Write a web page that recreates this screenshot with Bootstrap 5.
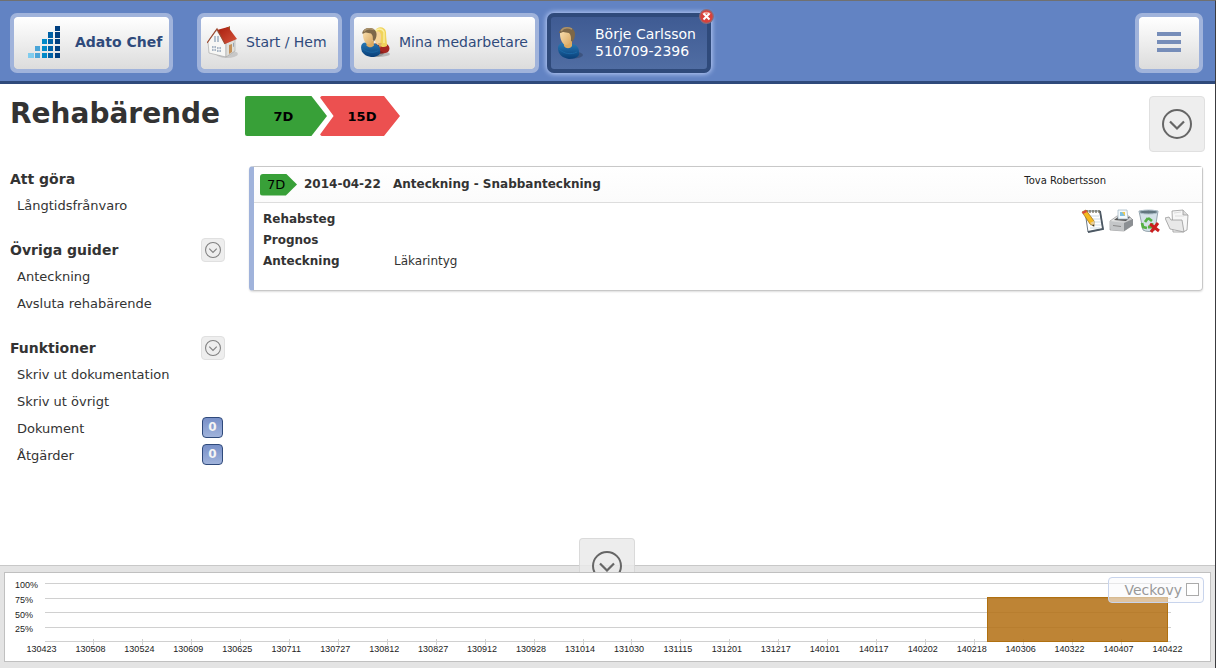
<!DOCTYPE html>
<html lang="sv">
<head>
<meta charset="utf-8">
<meta name="viewport" content="width=device-width, initial-scale=1">
<title>Rehabärende</title>
<link href="https://cdn.jsdelivr.net/npm/bootstrap@5.3.0/dist/css/bootstrap.min.css" rel="stylesheet">
<style>
body{font-family:"DejaVu Sans",Verdana,sans-serif;font-size:13px;line-height:17px;color:#333;background:#fff}
.app{min-height:100vh;border-top:1px solid #707070;border-right:1px solid #3c3c40;margin-right:1px}
.topbar{background:#6283c3;border-bottom:3px solid #2f4a7b;height:83px;padding:12px 12px 0 10px}
.nav-tile{height:60px;border:4px solid #a0b3db;border-radius:7px;background:linear-gradient(#fff,#dcdcdc);color:#2f4a7b;font-size:14px;line-height:17px;text-decoration:none;padding:0 6px 2px;background-clip:padding-box}
.nav-tile svg{flex:none}
.tile-home{min-width:145px}.tile-staff{min-width:189px}
.tile-brand{width:163px;padding:0 0 2px 14px;gap:14px;margin-right:16px;font-weight:bold;white-space:nowrap}
.tile-person{min-width:164px;padding-bottom:0;background:linear-gradient(#3f5b93,#506da3);border-color:#2f4a7b;color:#fff;box-shadow:0 0 5px 1px #b9cbf5}
.tile-close{position:absolute;top:-4px;right:-3px;width:15px;height:15px;padding:0;border:0;background:none;line-height:0}
.tile-menu{width:68px}
.pagehead{padding:12px 10px 13px 10px}
.pagehead h1{width:235px;font-size:28px;line-height:36px;font-weight:bold;margin:0;color:#333}
.stage{width:82px;height:40px;padding-right:5px;color:#000;font-weight:bold;background:#38a038;border-radius:2px 0 0 2px;clip-path:polygon(0 0,81% 0,100% 50%,81% 100%,0 100%)}
.stage-late{width:80px;margin-left:-7px;padding:0 0 0 4px;background:#ec5050;clip-path:polygon(1% 0,80% 0,100% 50%,80% 100%,1% 100%,0 96%,17% 50%,0 4%)}
.toggle{border:1px solid #e0e0e0;border-radius:4px;background:#eee;color:#666;padding:0}
.toggle-lg{width:56px;height:56px}
.toggle-sm{width:24px;height:24px;color:#808080}
.side{width:215px;margin:0 24px 0 10px;padding-top:1px}
.side h2{font-size:14px;line-height:18px;font-weight:bold;margin:0}
.side-head{height:26px}
.side section{margin-bottom:18px}
.side li{height:27px;padding:0 2px 0 7px}
.side a{color:#333;text-decoration:none}
.counter{width:21px;height:21px;border:1px solid #2f4a7b;border-radius:4px;background:linear-gradient(#7890c8,#a0b3db);color:#f4f4f4;font-weight:bold;font-size:12px;margin-bottom:2px}
.note{border:1px solid #c8c8c8;border-left:5px solid #a0b3db;border-radius:4px;box-shadow:0 1px 2px #ddd;font-size:12px;margin:1px 12px 0 0}
.note-head{height:36px;padding:0 96px 0 6px;border-bottom:1px solid #ddd;background:linear-gradient(#fff,#fbfbfb)}
.note-head h3{font-size:12px;line-height:17px;font-weight:bold;margin:0;white-space:pre}
.step-tag{width:37px;height:22px;padding-left:7px;background:#38a038;color:#000;font-size:13px;border-radius:3px 0 0 3px;clip-path:polygon(0 0,70% 0,100% 50%,70% 100%,0 100%);margin-right:7px}
.author{font-size:10px;line-height:12px;color:#222;padding-bottom:8px}
.note-body{padding:6px 13px 18px 9px}
.facts{display:grid;grid-template-columns:131px 1fr;grid-auto-rows:21px;line-height:21px;margin:0}
.facts dd{margin:0}
.tool{border:0;background:none;padding:0;width:24px;height:24px;line-height:0}
.timeline{background:#e4e4e4;border-top:1px solid #c8c8c8;padding:6px 4px;position:relative}
.chart{background:#fff;border:1px solid #c0c0c0;height:90px;font-family:"Liberation Sans",Arial,sans-serif;font-size:9px;line-height:12px;color:#222;padding-top:10px}
.y-labels{width:40px;padding-left:10px;height:59px;margin-top:-1px}
.y-labels span,.gridlines span{flex:1 1 0}
.y-labels span{white-space:nowrap;line-height:6px}
.plot{height:59px;margin-right:39px;border-bottom:1px solid #d0d0d0}
.gridlines{height:58px}
.gridlines span{border-top:1px solid #d0d0d0}
.bar{position:absolute;bottom:-1px;height:45px;background:rgba(179,112,20,.86);border:1px solid #b07010}
.ticks{display:grid;grid-template-columns:repeat(23,1fr);position:absolute;left:0;right:0;bottom:-4px;height:6px}
.ticks span{border-right:1px solid #d0d0d0}
.ticks span:last-child{border:0}
.x-labels{display:grid;grid-template-columns:repeat(24,1fr);margin:1px 18px 0 12px;text-align:center}
.fold{position:absolute;left:50%;bottom:100%;margin:0 0 -6px -29px;width:56px;height:34px;overflow:hidden;border:1px solid rgba(200,200,200,.5);border-bottom:0;border-radius:4px 4px 0 0;background:rgba(234,234,234,.85);color:#666;padding:12px 0 0;line-height:0}
.fold svg{display:block;margin:0 auto}
.week{position:absolute;right:11px;top:11px;width:96px;height:26px;border:1px solid #c8d4ec;border-radius:4px;background:rgba(250,250,252,.55);font-size:14px;color:#999;padding:1px 4px 0 0;z-index:2}
.week input{appearance:none;width:13px;height:13px;border:1px solid #aaa;background:#fff;margin:0 0 2px;border-radius:0}
</style>
</head>
<body>
<svg width="0" height="0" class="position-absolute" aria-hidden="true">
<defs>
<linearGradient id="blu" x1="0" y1="0" x2="0" y2="1"><stop offset="0" stop-color="#2878b4"/><stop offset="1" stop-color="#083e78"/></linearGradient>
<linearGradient id="skin" x1="0" y1="0" x2="1" y2="1"><stop offset="0" stop-color="#fbe3b6"/><stop offset="1" stop-color="#d8a55c"/></linearGradient>
<linearGradient id="metal" x1="0" y1="0" x2="1" y2="1"><stop offset="0" stop-color="#f4f4f4"/><stop offset="1" stop-color="#a4a7aa"/></linearGradient>
<linearGradient id="roof" x1="0" y1="0" x2="1" y2="1"><stop offset="0" stop-color="#a81d0c"/><stop offset="1" stop-color="#d6543c"/></linearGradient>
<symbol id="down" viewBox="0 0 30 30"><circle cx="15" cy="15" r="14" fill="none" stroke="currentColor" stroke-width="2"/><path d="M8 12.500l7 7 7-7" fill="none" stroke="currentColor" stroke-width="2.200"/></symbol>
<symbol id="man" viewBox="0 0 26 34"><ellipse cx="16" cy="29" rx="10" ry="3.500" fill="#000" opacity=".2"/><path d="M1 22c0-3 2-5 5-5l10 1c4 1 6 4 6 8v3c-2 3-6 4-10 4C6 32 1 29 1 22z" fill="url(#blu)"/><path d="M2 23c5 5 12 6 18 3" fill="none" stroke="#1c67a5" stroke-width="1"/><path d="M7 15h8v5c-2 3-6 3-8 0z" fill="#dcaa62"/><path d="M3 8c0-4 4-6 8-5 4 0 5 4 4 8-1 5-3 8-6 8s-6-5-6-11z" fill="url(#skin)"/><path d="M2 7C3 3 6 1 10 1c5 0 8 3 8 7 0 3-1 6-3 8l-1-2c0-3 0-5-2-7-3 0-6-2-8 0z" fill="#7d6748"/><path d="M4 5c2-3 6-4 11-2" fill="none" stroke="#ab926c" stroke-width="1.500"/></symbol>
</defs>
</svg>

<div class="app d-flex flex-column">
<header class="topbar d-flex align-items-start">
  <nav class="d-flex gap-2">
    <a class="nav-tile tile-brand d-flex align-items-center" href="#">
      <svg width="33" height="32" viewBox="0 0 33 32"><path fill="#7fccee" d="M0 27h6v5H0z"/><path fill="#4aa5d8" d="M7 20h5v5H7zM7 27h5v5H7z"/><path fill="#0089c8" d="M14 13h5v5h-5zM14 20h5v5h-5zM14 27h5v5h-5z"/><path fill="#0061a6" d="M20 6h5v6h-5zM20 13h5v5h-5zM20 20h5v5h-5zM20 27h5v5h-5z"/><path fill="#003f80" d="M27 0h5v5h-5zM27 6h5v6h-5zM27 13h5v5h-5zM27 20h5v5h-5zM27 27h5v5h-5z"/></svg>
      Adato Chef</a>
    <a class="nav-tile tile-home d-flex align-items-center gap-2" href="#">
      <svg width="31" height="34" viewBox="0 0 31 34"><ellipse cx="20" cy="29" rx="11" ry="4" fill="#000" opacity=".13"/><path d="M1 17L9 5l10 13v14L2 28z" fill="#f7f7f5" stroke="#a0a0a0" stroke-width=".6"/><path d="M19 18l9-4v12l-9 6z" fill="#e0dfda" stroke="#999" stroke-width=".5"/><path d="M19 3l4-2v6h-4z" fill="#9d5a2c"/><path d="M10 5l11-3 9 12-12 5z" fill="url(#roof)"/><path d="M0 18L10 4l8 15" fill="none" stroke="#9c4a30" stroke-width="1.200"/><path d="M7 11h2v6H7zM10 11h2v6h-2z" fill="#b4c1ce"/><path d="M5 21h4v5H5zM10 22h4v5h-4z" fill="#a9b6c4"/><path d="M7 21v5M5 23.500h4M12 22v5M10 24.500h4" stroke="#fff" stroke-width=".7"/><path d="M22 20l3-1v8l-3 2z" fill="#c49058"/><path d="M26 18l1-.500v4l-1 .500z" fill="#96a4b4"/></svg>
      Start / Hem</a>
    <a class="nav-tile tile-staff d-flex align-items-center gap-2" href="#">
      <svg width="31" height="32" viewBox="0 0 31 32"><ellipse cx="18" cy="28" rx="12" ry="3" fill="#000" opacity=".2"/><path d="M14 18c5-2 10-2 14 1 2 2 2 5 0 7-4 2-9 2-13 1z" fill="#a52620"/><path d="M15 5c2-5 10-5 11 1 0 6 1 10 1 14-3 2-6 1-8-1l-4-8z" fill="#f0d35b"/><path d="M15 7c2-3 6-2 6 3s-1 9-3 9-4-5-3-12z" fill="#f6d49a"/><path d="M15 6c2-4 7-4 9 0v11" fill="none" stroke="#fbf0a2" stroke-width="1.300"/><path d="M18 17h4l-2 5z" fill="#e2b068"/><use href="#man" x="0" y="1" width="24" height="31"/></svg>
      Mina medarbetare</a>
    <div class="position-relative">
      <a class="nav-tile tile-person d-flex align-items-center" href="#" aria-current="page">
        <svg width="26" height="34" class="me-2"><use href="#man"/></svg>
        <span class="ms-1">Börje Carlsson<br>510709-2396</span></a>
      <button class="tile-close" type="button" aria-label="Stäng"><svg width="15" height="15" viewBox="0 0 15 15"><circle cx="7.500" cy="7.500" r="6.800" fill="#d8413b" stroke="#8d6b78" stroke-width="1.200"/><path d="M3 5a5.500 5 0 0 1 9 0z" fill="#ef9a90"/><path d="M4.500 4.500l6 6m0-6l-6 6" stroke="#fff" stroke-width="2"/></svg></button>
    </div>
  </nav>
  <button class="nav-tile tile-menu ms-auto" type="button" aria-label="Meny"><svg width="24" height="20" viewBox="0 0 24 20" class="d-block mx-auto"><path fill="#768db9" d="M0 0h24v4H0zM0 8h24v4H0zM0 16h24v4H0z"/></svg></button>
</header>

<div class="pagehead d-flex align-items-start">
  <h1>Rehabärende</h1>
  <div class="d-flex">
    <div class="stage d-flex align-items-center justify-content-center">7D</div>
    <div class="stage stage-late d-flex align-items-center justify-content-center">15D</div>
  </div>
  <button class="toggle toggle-lg ms-auto d-flex align-items-center justify-content-center" type="button" aria-label="Visa mer"><svg width="30" height="30"><use href="#down"/></svg></button>
</div>

<div class="d-flex align-items-start flex-grow-1">
  <aside class="side flex-shrink-0">
    <section>
      <div class="side-head d-flex align-items-center"><h2>Att göra</h2></div>
      <ul class="list-unstyled mb-0"><li class="d-flex align-items-center"><a href="#">Långtidsfrånvaro</a></li></ul>
    </section>
    <section>
      <div class="side-head d-flex align-items-center justify-content-between"><h2>Övriga guider</h2><button class="toggle toggle-sm d-flex align-items-center justify-content-center" type="button" aria-label="Fäll ut Övriga guider"><svg width="16" height="16"><use href="#down"/></svg></button></div>
      <ul class="list-unstyled mb-0"><li class="d-flex align-items-center"><a href="#">Anteckning</a></li><li class="d-flex align-items-center"><a href="#">Avsluta rehabärende</a></li></ul>
    </section>
    <section>
      <div class="side-head d-flex align-items-center justify-content-between"><h2>Funktioner</h2><button class="toggle toggle-sm d-flex align-items-center justify-content-center" type="button" aria-label="Fäll ut Funktioner"><svg width="16" height="16"><use href="#down"/></svg></button></div>
      <ul class="list-unstyled mb-0">
        <li class="d-flex align-items-center"><a href="#">Skriv ut dokumentation</a></li>
        <li class="d-flex align-items-center"><a href="#">Skriv ut övrigt</a></li>
        <li class="d-flex align-items-center justify-content-between"><a href="#">Dokument</a><span class="counter d-flex align-items-center justify-content-center">0</span></li>
        <li class="d-flex align-items-center justify-content-between"><a href="#">Åtgärder</a><span class="counter d-flex align-items-center justify-content-center">0</span></li>
      </ul>
    </section>
  </aside>
  <main class="flex-grow-1">
    <article class="note">
      <div class="note-head d-flex align-items-center">
        <span class="step-tag d-flex align-items-center">7D</span>
        <h3 class="me-auto"><time class="me-2">2014-04-22</time> Anteckning - Snabbanteckning</h3>
        <span class="author">Tova Robertsson</span>
      </div>
      <div class="note-body d-flex align-items-start">
        <dl class="facts flex-grow-1">
          <dt>Rehabsteg</dt><dd></dd>
          <dt>Prognos</dt><dd></dd>
          <dt>Anteckning</dt><dd>Läkarintyg</dd>
        </dl>
        <div class="d-flex gap-1">
          <button class="tool" type="button" aria-label="Redigera"><svg width="24" height="24" viewBox="0 0 24 24"><path d="M4 2l15 0 3 18-15 3z" fill="#fff" stroke="#6b7884"/><path d="M19 2l3 18-15 3" fill="none" stroke="#4d5964" stroke-width="1.800"/><path d="M6 1v3M9 1v3M12 1v3M15 1v3M18 1v3" stroke="#6d6a58" stroke-width="1.200"/><path d="M8 7h10M9 10h10M9 13h11M9 16h11M9 19h10" stroke="#c2d2de" stroke-width=".8"/><path d="M1 3l4-2 8 11v5l-4-2z" fill="#f6b91e" stroke="#9a6c12" stroke-width=".7"/><path d="M1 3l4-2 1 2-4 2z" fill="#d9483a"/><path d="M9 14l4-2v5z" fill="#e9cf9b"/><path d="M12 15l1.500 2.500-2-.500z" fill="#222"/></svg></button>
          <button class="tool" type="button" aria-label="Skriv ut"><svg width="24" height="24" viewBox="0 0 24 24"><path d="M1 12l7-5h12l4 4v5l-9 6-14-1z" fill="url(#metal)" stroke="#888" stroke-width=".6"/><path d="M5 11l4-3h12l-4 4z" fill="#555"/><path d="M9 1h9l1 9H9z" fill="#f3f9fc" stroke="#9eb3c0" stroke-width=".7"/><path d="M11 3h5v4h-5z" fill="#7ec0e0"/><path d="M13 3h3v4z" fill="#edca55"/><path d="M1 12l14 2v8L2 21z" fill="#c4c6c8"/><path d="M4 16l8 1v1l-8-1z" fill="#888"/><path d="M15 14l9-4v6l-9 6z" fill="#8b8f93"/></svg></button>
          <button class="tool" type="button" aria-label="Ta bort"><svg width="24" height="24" viewBox="0 0 24 24"><path d="M2 2h19l-3 19c-3 2-9 2-12 0z" fill="#d4e1e8" stroke="#80909a" stroke-width=".8"/><ellipse cx="11.500" cy="3" rx="9.500" ry="2" fill="#62767f" stroke="#afc0ca"/><path d="M11 9l-3 4M5 14l1 4 4 1M11 9l4 3M15 14v4h-4" fill="none" stroke="#55b044" stroke-width="2.800"/><path d="M13 15l9 7m-1-8l-7 9" stroke="#cc1f1f" stroke-width="3"/></svg></button>
          <button class="tool" type="button" aria-label="Flytta till mapp"><svg width="24" height="24" viewBox="0 0 24 24"><path d="M7 2l11-1 5 5-1 15-4 2H8z" fill="#f7f7f7" stroke="#999" stroke-width=".8"/><path d="M18 1v5h5" fill="#ddd" stroke="#999" stroke-width=".8"/><path d="M9 4l7-1M10 7h9" stroke="#ddd"/><path d="M0 9l4-1 2 3 11 0 2 12-14-3z" fill="#e8e8e8" stroke="#999" stroke-width=".8"/></svg></button>
        </div>
      </div>
    </article>
  </main>
</div>

<footer class="timeline">
  <button class="fold" type="button" aria-label="Fäll ihop tidslinjen"><svg width="30" height="30"><use href="#down"/></svg></button>
  <label class="week d-flex align-items-center justify-content-end gap-1" for="week">Veckovy <input type="checkbox" id="week"></label>
  <div class="chart">
    <div class="d-flex">
      <div class="y-labels d-flex flex-column"><span>100%</span><span>75%</span><span>50%</span><span>25%</span></div>
      <div class="plot flex-grow-1 position-relative">
        <div class="gridlines d-flex flex-column"><span></span><span></span><span></span><span></span></div>
        <div class="ticks" id="ticks"></div>
        <div class="bar" style="left:83.7%;width:16%"></div>
      </div>
    </div>
    <div class="x-labels" id="dates"></div>
  </div>
</footer>
</div>
<script src="https://cdn.jsdelivr.net/npm/bootstrap@5.3.0/dist/js/bootstrap.bundle.min.js"></script>
<script>
const dates = "130423 130508 130524 130609 130625 130711 130727 130812 130827 130912 130928 131014 131030 131115 131201 131217 140101 140117 140202 140218 140306 140322 140407 140422".split(" ");
document.getElementById("dates").innerHTML = dates.map(d => `<span>${d}</span>`).join("");
document.getElementById("ticks").innerHTML = dates.slice(1).map(() => "<span></span>").join("");
</script>
</body>
</html>
